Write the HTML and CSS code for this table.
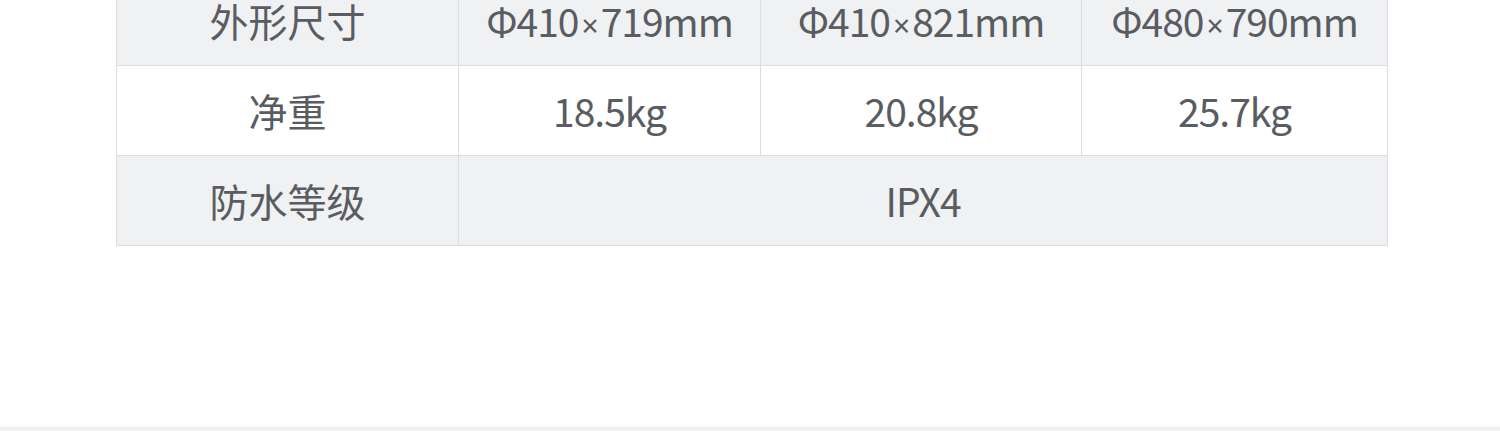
FILE: index.html
```html
<!DOCTYPE html>
<html>
<head>
<meta charset="UTF-8">
<title>参数</title>
<link rel="stylesheet" href="styles.css">
</head>
<body>

<div class="wrap">
	<table class="spec">
		<colgroup>
			<col class="c1">
			<col class="c2">
			<col class="c3">
			<col class="c4">
		</colgroup>
		<tr class="gray">
			<td>外形尺寸</td>
			<td class="num">Φ410<span class="x">×</span>719mm</td>
			<td class="num">Φ410<span class="x">×</span>821mm</td>
			<td class="num">Φ480<span class="x">×</span>790mm</td>
		</tr>
		<tr>
			<td>净重</td>
			<td class="num">18.5kg</td>
			<td class="num">20.8kg</td>
			<td class="num">25.7kg</td>
		</tr>
		<tr class="gray">
			<td>防水等级</td>
			<td class="num" colspan="3">IPX4</td>
		</tr>
	</table>
</div>

<div class="foot"></div>

</body>
</html>
```

FILE: styles.css
```css
body {margin: 0; background: #fff; overflow: hidden;}

.wrap {display: flow-root; padding: 0 113px 0 116px; height: 426px;}

.spec {width: 1271px; border-collapse: collapse; table-layout: fixed; margin-top: -25px;
	font-family: "Noto Sans CJK SC", "Noto Sans", sans-serif; font-size: 39px; color: #595c61;}
.spec col.c1 {width: 342px;}
.spec col.c2 {width: 302px;}
.spec col.c3 {width: 321px;}
.spec col.c4 {width: 306px;}
.spec td {height: 89px; padding: 0; text-align: center; border: 1px solid #dcdde0; line-height: 1;}
.spec tr.gray td {background: #f0f1f3;}
.spec td.num {letter-spacing: -1px;}
.spec .x {font-family: "Noto Sans", sans-serif; font-size: 30px; padding: 0 3px;}

.foot {height: 4px; background: #f1f1f1; border-top: 1px solid #f8f8f8;}
```
